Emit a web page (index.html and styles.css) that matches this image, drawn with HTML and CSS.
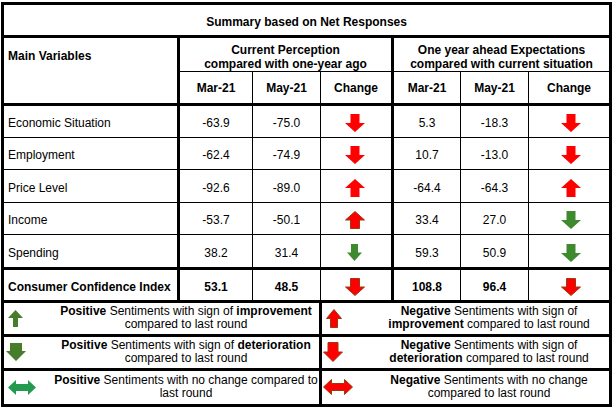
FILE: index.html
```html
<!DOCTYPE html>
<html lang="en">
<head>
<meta charset="utf-8">
<title>Summary based on Net Responses</title>
<link rel="stylesheet" href="styles.css">
</head>
<body>
<table class="summary">
  <colgroup>
    <col class="c-var"><col class="c-mar"><col class="c-may"><col class="c-chg">
    <col class="c-mar2"><col class="c-may2"><col class="c-chg2">
  </colgroup>
  <thead>
    <tr class="r-title"><th colspan="7">Summary based on Net Responses</th></tr>
    <tr class="r-group">
      <th rowspan="2" class="var-head">Main Variables</th>
      <th colspan="3" class="grp-end">Current Perception<br>compared with one-year ago</th>
      <th colspan="3">One year ahead Expectations<br>compared with current situation</th>
    </tr>
    <tr class="r-sub">
      <th>Mar-21</th><th>May-21</th><th class="grp-end">Change</th>
      <th>Mar-21</th><th>May-21</th><th>Change</th>
    </tr>
  </thead>
  <tbody>
    <tr class="r-data">
      <td class="var">Economic Situation</td><td>-63.9</td><td>-75.0</td>
      <td class="grp-end chg"><svg class="arrow red" viewBox="0 0 20 18" width="20" height="18"><path d="M5.5 0h9v9H20l-10 9L0 9h5.5z"/></svg></td>
      <td>5.3</td><td>-18.3</td>
      <td class="chg2"><svg class="arrow red" viewBox="0 0 20 18" width="20" height="18"><path d="M5.5 0h9v9H20l-10 9L0 9h5.5z"/></svg></td>
    </tr>
    <tr class="r-data">
      <td class="var">Employment</td><td>-62.4</td><td>-74.9</td>
      <td class="grp-end chg"><svg class="arrow red" viewBox="0 0 20 18" width="20" height="18"><path d="M5.5 0h9v9H20l-10 9L0 9h5.5z"/></svg></td>
      <td>10.7</td><td>-13.0</td>
      <td class="chg2"><svg class="arrow red" viewBox="0 0 20 18" width="20" height="18"><path d="M5.5 0h9v9H20l-10 9L0 9h5.5z"/></svg></td>
    </tr>
    <tr class="r-data tall">
      <td class="var">Price Level</td><td>-92.6</td><td>-89.0</td>
      <td class="grp-end chg"><svg class="arrow red" viewBox="0 0 20 18" width="20" height="18"><path d="M5.5 18h9V9H20L10 0 0 9h5.5z"/></svg></td>
      <td>-64.4</td><td>-64.3</td>
      <td class="chg2"><svg class="arrow red" viewBox="0 0 20 18" width="20" height="18"><path d="M5.5 18h9V9H20L10 0 0 9h5.5z"/></svg></td>
    </tr>
    <tr class="r-data">
      <td class="var">Income</td><td>-53.7</td><td>-50.1</td>
      <td class="grp-end chg"><svg class="arrow red mixed" viewBox="0 0 20 18" width="20" height="18"><path d="M5.5 17.5h9V9H19.5L10 0.5 0.5 9h5z"/></svg></td>
      <td>33.4</td><td>27.0</td>
      <td class="chg2"><svg class="arrow green" viewBox="0 0 20 18" width="20" height="18"><path d="M5.5 0h9v9H20l-10 9L0 9h5.5z"/></svg></td>
    </tr>
    <tr class="r-data tall">
      <td class="var">Spending</td><td>38.2</td><td>31.4</td>
      <td class="grp-end chg"><svg class="arrow green" viewBox="0 0 15 17" width="15" height="17"><path d="M4 0h7v8.5H15L7.5 17 0 8.5h4z"/></svg></td>
      <td>59.3</td><td>50.9</td>
      <td class="chg2"><svg class="arrow green" viewBox="0 0 20 18" width="20" height="18"><path d="M5.5 0h9v9H20l-10 9L0 9h5.5z"/></svg></td>
    </tr>
    <tr class="r-cci">
      <td class="var">Consumer Confidence Index</td><td>53.1</td><td>48.5</td>
      <td class="grp-end chg"><svg class="arrow red mixed" viewBox="0 0 20 18" width="20" height="18"><path d="M5.5 0.5h9v8.5H19.5l-9.5 8.5L0.5 9h5z"/></svg></td>
      <td>108.8</td><td>96.4</td>
      <td class="chg2"><svg class="arrow red mixed" viewBox="0 0 20 18" width="20" height="18"><path d="M5.5 0.5h9v8.5H19.5l-9.5 8.5L0.5 9h5z"/></svg></td>
    </tr>
  </tbody>
  <tfoot>
    <tr class="r-legend l1">
      <td colspan="3" class="legend">
        <div class="key key-left">
          <span class="key-icon pad4"><svg class="arrow green-dark" viewBox="0 0 15 17" width="15" height="17"><path d="M5 17h5V8h5L7.5 0 0 8h5z"/></svg></span>
          <span class="key-text"><b>Positive</b> Sentiments with sign of <b>improvement</b><br>compared to last round</span>
        </div>
      </td>
      <td colspan="4" class="legend">
        <div class="key key-right">
          <span class="key-icon pad4"><svg class="arrow red mixed" viewBox="0 0 16 19" width="16" height="19"><path d="M4.5 18.5h7V9.5H15.5L8 0.5 0.5 9.5h4z"/></svg></span>
          <span class="key-text"><b>Negative</b> Sentiments with sign of<br><b>improvement</b> compared to last round</span>
        </div>
      </td>
    </tr>
    <tr class="r-legend l2">
      <td colspan="3" class="legend">
        <div class="key key-left">
          <span class="key-icon"><svg class="arrow green-dark" viewBox="0 0 20 18" width="20" height="18"><path d="M4 0h12v8h4l-10 10L0 8h4z"/></svg></span>
          <span class="key-text"><b>Positive</b> Sentiments with sign of <b>deterioration</b><br>compared to last round</span>
        </div>
      </td>
      <td colspan="4" class="legend">
        <div class="key key-right">
          <span class="key-icon"><svg class="arrow red mixed" viewBox="0 0 20 20" width="20" height="20"><path d="M5 0.5h10v9.5H19.5L10 19.5 0.5 10H5z"/></svg></span>
          <span class="key-text"><b>Negative</b> Sentiments with sign of<br><b>deterioration</b> compared to last round</span>
        </div>
      </td>
    </tr>
    <tr class="r-legend l3">
      <td colspan="3" class="legend">
        <div class="key key-left">
          <span class="key-icon pad4"><svg class="arrow teal" viewBox="0 0 28 15" width="28" height="15"><path d="M0 7.5L8 0v4h12V0l8 7.5-8 7.5v-4H8v4z"/></svg></span>
          <span class="key-text"><b>Positive</b> Sentiments with no change compared to<br>last round</span>
        </div>
      </td>
      <td colspan="4" class="legend">
        <div class="key key-right">
          <span class="key-icon"><svg class="arrow red mixed" viewBox="0 0 30 16" width="30" height="16"><path d="M0.5 8l8-7.5v4h13v-4l8 7.5-8 7.5v-4h-13v4z"/></svg></span>
          <span class="key-text"><b>Negative</b> Sentiments with no change<br>compared to last round</span>
        </div>
      </td>
    </tr>
  </tfoot>
</table>
</body>
</html>
```

FILE: styles.css
```css
html, body {
  margin: 0;
  padding: 0;
  background: #fff;
}

body {
  font-family: "Liberation Sans", Arial, sans-serif;
  font-size: 12px;
  color: #000;
  padding: 2px 0 0 1px;
}

.summary {
  border-collapse: collapse;
  table-layout: fixed;
  width: 609px;
  border: 3px solid #000;
}

.c-var { width: 176px; }
.c-mar { width: 74px; }
.c-may { width: 68px; }
.c-chg { width: 72px; }
.c-mar2 { width: 68px; }
.c-may2 { width: 68px; }
.c-chg2 { width: 82px; }

.summary th,
.summary td {
  border: 1px solid #000;
  padding: 0;
  text-align: center;
  vertical-align: middle;
  line-height: 14px;
}

.summary th {
  font-weight: bold;
}

.r-title th {
  height: 25.5px;
  padding-top: 4px;
  border-bottom: 3px solid #000;
}

.r-group th {
  height: 28px;
  padding-top: 5px;
}

.r-sub th {
  height: 29.5px;
  padding-top: 2px;
  border-bottom: 3px solid #000;
}

.summary th.var-head {
  text-align: left;
  vertical-align: top;
  padding: 11px 0 0 4px;
  height: auto;
  border-right: 3px solid #000;
  border-bottom: 3px solid #000;
}

.summary .grp-end {
  border-right: 3px solid #000;
}

.summary td.var {
  text-align: left;
  padding-left: 4px;
  border-right: 3px solid #000;
}

.r-data td {
  height: 28px;
  padding-top: 3px;
}

.r-data.tall td {
  height: 29px;
}

.r-cci td {
  height: 27px;
  padding-top: 3px;
  font-weight: bold;
  border-top: 3px solid #000;
  border-bottom: 3px solid #000;
}

.summary td.chg {
  padding-right: 3px;
}

.summary td.chg2 {
  padding-left: 3px;
}

.arrow {
  display: block;
  margin: 0 auto;
}

.arrow.red { fill: #ff0000; }
.arrow.red.mixed { stroke: #9a3a12; stroke-width: 1; stroke-linejoin: miter; }
.arrow.green { fill: #3f8a2f; }
.arrow.green-dark { fill: #467d2a; }
.arrow.teal { fill: #239a4e; }

.summary td.legend {
  border: 3px solid #000;
  padding: 0;
}

.l1 td.legend { height: 30.5px; }
.l2 td.legend { height: 31px; }
.l3 td.legend { height: 33px; }

.key {
  display: grid;
  align-items: center;
}

.key-left {
  grid-template-columns: 49px 1fr;
}

.key-right {
  grid-template-columns: 47px 1fr;
}

.key-icon {
  padding-left: 2px;
}

.key-right .key-icon {
  padding-left: 1px;
}

.key .key-icon.pad4 {
  padding-left: 4px;
}

.key-icon .arrow {
  margin: 0;
}

.key-text {
  text-align: center;
  white-space: nowrap;
  line-height: 13.5px;
}
```
